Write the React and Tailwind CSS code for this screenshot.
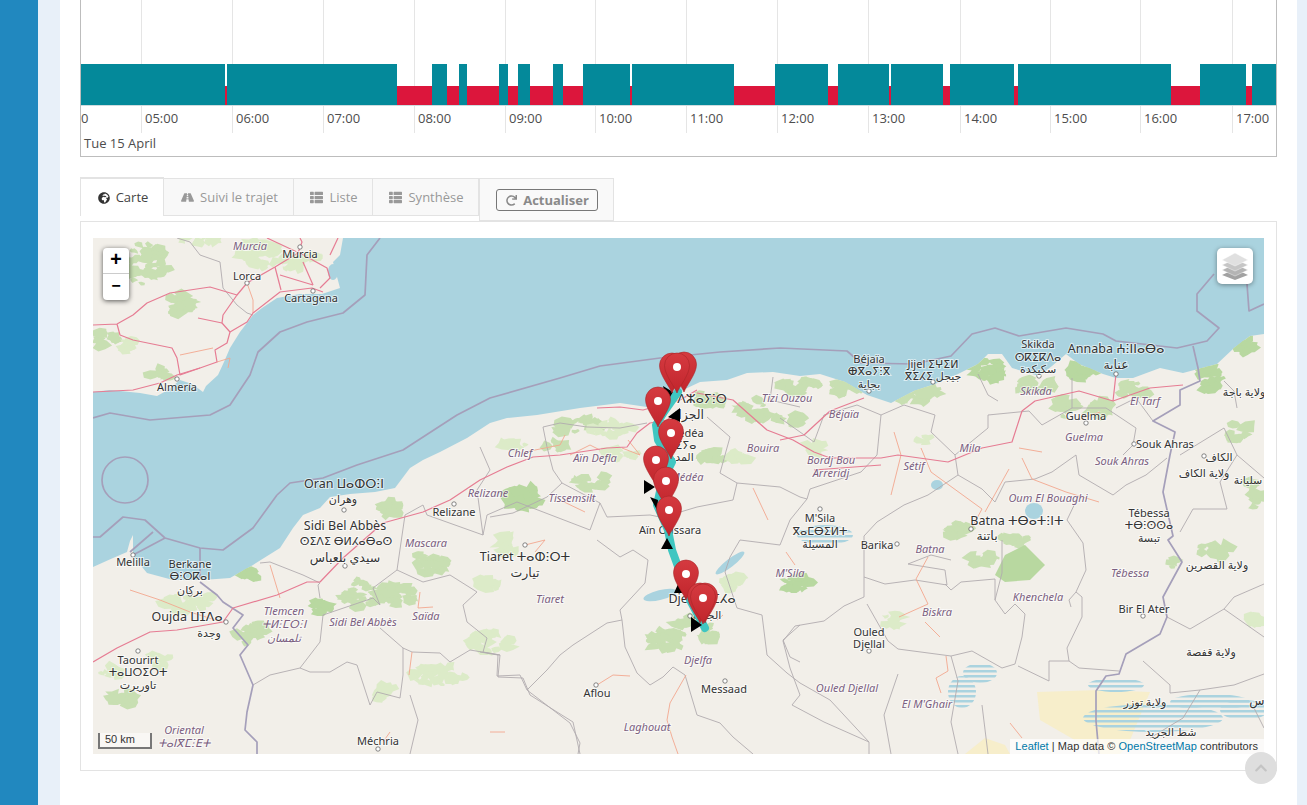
import React from 'react';
import { FaGlobeAfrica, FaRoad, FaThList, FaRedo, FaChevronUp } from 'react-icons/fa';

// timeline, px from the left edge of the chart
const driving = [
  [0, 144], [146, 170], [351, 15], [378, 8], [418, 9], [437, 12], [472, 10], [502, 47],
  [551, 102], [694, 53], [757, 51], [810, 52], [869, 64], [937, 153], [1119, 46], [1171, 24],
];
const ticks = [
  [60, '05:00'], [151, '06:00'], [242, '07:00'], [333, '08:00'], [424, '09:00'], [514, '10:00'],
  [605, '11:00'], [696, '12:00'], [787, '13:00'], [879, '14:00'], [969, '15:00'], [1059, '16:00'], [1151, '17:00'],
];

const landSpain =
  '93,238 343,238 340,255 333,262 340,288 322,294 300,294 277,298 262,308 253,315 240,332 230,348 224,362 218,375 206,386 203,392 192,384 180,380 168,390 157,396 140,393 110,390 93,392';
const landAfrica =
  '93,567 113,558 127,552 130,541 133,535 133,556 147,573 173,580 203,580 230,578 253,565 280,548 293,528 303,515 320,508 330,497 350,494 375,492 395,488 410,468 423,460 440,452 467,438 490,423 507,418 537,415 580,408 620,403 647,407 667,403 683,390 700,382 727,380 747,373 773,372 800,376 820,374 845,382 867,395 891,403 914,391 935,384 958,374 978,364 988,354 1002,354 1012,368 1039,376 1052,366 1066,354 1079,364 1103,374 1116,378 1133,378 1160,368 1183,373 1217,364 1234,348 1250,336 1264,334 1264,754 93,754';

// sea borders and the thick country borders
const maritime = [
  '380,238 367,255 365,295 343,313 307,322 280,332 258,352 250,375 230,405 210,415 150,420 110,413 93,418',
  '277,495 290,483 323,478 357,465 403,450 457,415 490,398 560,378 600,366 660,358 720,352 780,348 847,351 861,363 914,364 951,356 972,334 995,328 1019,336 1066,328 1103,334 1116,341 1177,348 1207,341 1219,328 1197,311 1197,294 1214,274',
  '1247,284 1249,311 1264,304',
  '277,495 253,528 223,550 200,548 165,538 145,520 123,517 100,537 93,537',
  '200,548 200,578',
  '165,538 133,555',
  '153,532 130,552',
  '1193,346 1198,368 1200,381 1180,390 1180,405 1153,421 1175,432 1170,455 1163,492 1173,536 1168,540 1182,562 1163,597 1167,617 1160,634 1126,654 1119,674 1106,676 1096,691 1096,721 1099,754',
  '200,582 217,595 223,602 243,615 233,628 248,645 240,655 253,685 247,712 245,730 257,742 257,754',
];

const borders = [
  '177,238 190,242 200,255 220,262 223,288 237,305 247,313 253,315',
  '480,652 498,655 497,676 520,675 527,690 547,670 560,655 573,645 607,623 622,620 620,610 645,583 648,560 633,550 620,557 597,540',
  '622,620 625,647 637,673 650,685 663,677 673,667 685,675 697,715 720,723 733,737 753,754',
  '527,690 570,723 580,743 578,754',
  '740,540 730,557 725,572 737,608 762,615 767,655 787,673 800,683 830,700 869,742',
  '800,625 783,640 790,657 800,662',
  '253,685 270,675 300,668 310,672 330,672 347,662 357,665 370,705 377,692 400,698 403,675 403,648 380,628',
  '300,668 320,642 323,615 373,598 380,605 373,588 397,570 423,582 450,575 477,592 463,605 467,622 487,638 483,652 500,655 498,677 523,678 530,695 557,712 573,722 580,754',
  '320,598 318,585 320,583 303,575 270,562 260,563',
  '403,648 412,652 440,653 450,662 470,650 500,655',
  '410,695 418,720 410,754',
  '483,535 427,515 423,505 405,515 397,570',
  '483,535 487,515 517,502 590,530 600,503',
  '480,447 490,470 477,490 483,535',
  '543,427 560,423 587,427 620,428 647,423',
  '543,427 547,447 553,470 562,483 600,503 607,517 650,515 660,517',
  '562,483 547,497 513,513 490,517',
  '707,417 730,437 720,473 737,483 780,487 800,497 807,499',
  '737,483 733,500 697,507 677,513',
  '773,377 770,400 800,407',
  '780,418 800,432 814,442 824,415 857,405 881,415 904,405 935,415 931,432 955,455 958,475 928,495 904,505 877,522 864,536 864,577 864,597 844,606 824,621 795,626 783,641 790,668 800,695 792,705 824,722 869,742 869,754',
  '881,415 877,455 861,472 810,489 807,499 790,520 780,545 740,540',
  '958,475 982,489 995,502 1005,482 1035,479 1052,472 1076,455 1079,475 1113,495 1126,485 1146,475 1167,458',
  '955,455 988,428 988,415 1029,411 1042,425 1072,408 1106,408 1136,428 1133,445 1123,455',
  '998,401 988,395 978,374',
  '1072,378 1072,408',
  '1116,408 1136,398 1153,421',
  '1180,455 1224,428 1237,455 1220,482 1227,509 1193,509 1180,532',
  '1237,408 1234,391 1224,381',
  '1237,455 1264,478',
  '864,577 885,584 915,580 947,585 945,570 908,564 931,555 951,560',
  '867,604 888,641 898,649 951,656 972,651 1002,668 1015,664 1022,637 1025,614 1015,604 1005,614 995,600 995,579 961,582 951,590 945,584',
  '951,656 958,681 951,722 958,754',
  '898,674 884,715 891,754',
  '1018,666 1049,681 1049,661 1069,661 1079,668 1119,671',
  '1069,661 1067,648 1082,617 1082,597 1076,592 1069,600 1071,607',
  '1076,592 1086,570 1083,543 1067,520 1079,495',
  '1002,540 1002,573 995,600',
  '1167,617 1190,629 1224,609 1234,597 1264,584',
  '1143,661 1170,685 1170,693 1200,690 1234,685 1264,674',
  '1224,609 1264,637',
  '1200,690 1183,718 1150,738',
  '1254,708 1264,728',
  '982,705 988,754',
];

const roads = [
  '93,325 117,324 133,315 147,303 170,293 210,287 237,295 223,315 222,323 230,332 227,343 215,350 217,362 200,368 180,375 177,358 172,348 133,340 120,335 117,324',
  '93,392 133,390 160,383 177,375 200,368',
  '230,332 247,322 253,313 280,292 312,288 323,292',
  '237,295 247,283 275,267 298,253 302,242 300,238',
  '275,267 281,290',
  '280,275 303,282 313,285',
  '303,262 313,285',
  '300,253 327,268 330,278 320,288',
  '330,255 338,238',
  '267,238 297,252',
  '198,318 222,323',
  '93,662 117,648 150,632 177,630 223,622 233,608 277,595 307,582 320,582 343,558 383,523 423,512 450,500 480,480 507,467 533,457 560,455 607,448 627,447 637,433 650,423 667,420 680,410',
  '597,408 620,407 643,410 680,400 697,390',
  '697,393 733,400 767,430 793,440 814,452 830,458 881,458 898,455 948,462 982,448 1012,442 1022,411 1035,401 1079,391 1113,401 1150,388 1183,385',
  '780,440 804,435 830,411 864,398',
  '814,470 881,465',
  '1116,374 1113,401',
];

const minorRoads = [
  '180,355 213,348',
  '247,283 253,300 253,313',
  '217,362 230,358 228,368',
  '270,565 280,598',
  '420,592 418,608 433,607',
  '412,652 409,675',
  '390,732 383,742',
  '490,732 505,732',
  '597,685 613,675 630,676',
  '686,675 670,703 667,720 672,737 678,754',
  '717,620 723,615',
  '894,432 901,455 891,495',
  '921,448 931,472 982,509 971,529',
  '1009,469 985,512',
  '1019,448 1042,452',
  '1022,458 1032,479 1066,492 1099,502',
  '928,557 916,579 928,604 899,617',
  '925,622 940,637',
  '946,656 948,671 936,678 941,693',
  '1010,723 1022,738',
  '130,590 160,600 190,612 222,622',
  '560,500 585,512',
  '753,488 768,520',
  '786,552 795,565',
  '1078,420 1100,412',
  '525,545 545,540 535,552',
  '525,452 560,445 565,435',
  '570,455 590,445 600,450',
  '622,448 640,455 628,440',
];

// cx, cy, rx, ry, patches, colour index
const greenAreas = [
  [145, 262, 22, 24, 22, 1], [105, 338, 14, 8, 9, 1], [180, 305, 14, 10, 10, 1], [165, 374, 14, 5, 7, 1], [130, 345, 12, 5, 5, 2],
  [255, 255, 24, 14, 14, 2], [300, 262, 22, 8, 9, 2], [200, 240, 20, 6, 6, 2], [250, 575, 7, 6, 6, 0], [390, 508, 10, 8, 9, 1],
  [520, 498, 14, 10, 12, 0], [363, 592, 24, 14, 20, 1], [323, 608, 12, 6, 7, 0], [250, 632, 16, 13, 16, 1], [400, 595, 15, 10, 13, 1],
  [430, 562, 16, 10, 12, 1], [507, 545, 10, 10, 8, 2], [487, 585, 10, 6, 6, 2], [190, 602, 30, 8, 12, 2], [123, 698, 14, 8, 8, 1],
  [490, 642, 22, 10, 12, 2], [440, 675, 32, 9, 15, 2], [383, 692, 14, 9, 7, 2], [110, 670, 10, 6, 4, 2], [160, 660, 12, 6, 4, 2],
  [577, 424, 26, 8, 13, 1], [610, 428, 22, 8, 10, 2], [527, 497, 14, 12, 10, 0], [590, 480, 18, 8, 9, 1], [620, 455, 16, 6, 7, 2],
  [515, 445, 12, 5, 5, 2], [555, 445, 14, 5, 5, 1], [713, 457, 12, 5, 6, 1], [737, 457, 12, 5, 5, 2], [757, 410, 18, 10, 12, 1],
  [710, 400, 18, 7, 8, 1], [800, 385, 20, 8, 12, 1], [847, 388, 16, 8, 10, 1], [921, 395, 24, 8, 14, 1], [988, 371, 16, 11, 14, 0],
  [1035, 385, 16, 8, 10, 1], [1082, 371, 16, 8, 12, 0], [1133, 390, 18, 7, 10, 1], [1210, 378, 14, 11, 12, 0], [1244, 348, 10, 8, 8, 0],
  [1066, 408, 14, 9, 10, 1], [1099, 411, 11, 10, 9, 1], [790, 421, 14, 7, 8, 1], [814, 448, 10, 5, 4, 2], [958, 529, 12, 7, 7, 1],
  [1015, 539, 14, 7, 7, 1], [1257, 495, 8, 14, 7, 1], [982, 557, 16, 7, 9, 1], [797, 584, 14, 7, 9, 0], [891, 619, 9, 6, 6, 2],
  [1214, 550, 18, 7, 7, 1], [1170, 563, 7, 5, 3, 1], [1257, 620, 7, 7, 4, 2], [667, 640, 18, 12, 16, 1], [710, 633, 8, 8, 7, 1],
  [735, 583, 10, 6, 6, 2], [682, 622, 14, 5, 6, 1], [1240, 432, 12, 9, 6, 1], [925, 440, 14, 5, 3, 2],
];
const greenColours = ['#b8d8a0', '#c8dfb2', '#dcebc8'];

// fixed seed so the map never changes between renders
function makePatches() {
  let seed = 12345;
  const rnd = () => {
    seed = (seed * 16807) % 2147483647;
    return seed / 2147483647;
  };
  const out = [];
  greenAreas.forEach(([cx, cy, rx, ry, n, colour]) => {
    for (let i = 0; i < n * 1.6; i++) {
      const a = rnd() * Math.PI * 2;
      const d = Math.sqrt(rnd());
      const x = cx + Math.cos(a) * d * rx;
      const y = cy + Math.sin(a) * d * ry;
      const size = 2.5 + rnd() * 4.5;
      const pts = [];
      for (let k = 0; k < 7; k++) {
        const t = (k / 7) * Math.PI * 2;
        const r = size * (0.45 + rnd() * 0.9);
        pts.push(`${(x + Math.cos(t) * r * 1.4).toFixed(1)},${(y + Math.sin(t) * r * 0.9).toFixed(1)}`);
      }
      out.push({ pts: pts.join(' '), fill: greenColours[colour] });
    }
  });
  return out;
}
const patches = makePatches();

const labels = [
  ['r', 250, 250, 'Murcia'], ['p', 300, 258, 'Murcia'], ['p', 247, 280, 'Lorca'], ['p', 311, 302, 'Cartagena'],
  ['p', 177, 391, 'Almería'], ['P', 344, 488, 'Oran ⵡⴰⵀⵔⵗⵏ'], ['p', 343, 503, 'وهران'],
  ['P', 345, 530, 'Sidi Bel Abbès'], ['p', 346, 545, 'ⵙⵉⴷⵉ ⴱⵍⵃⴰⴱⴰⵙ'], ['P', 345, 562, 'سيدي بلعباس'],
  ['p', 454, 516, 'Relizane'], ['r', 488, 497, 'Relizane'], ['r', 426, 547, 'Mascara'], ['r', 572, 502, 'Tissemsilt'],
  ['r', 520, 457, 'Chlef'], ['r', 595, 462, 'Aïn Defla'], ['r', 763, 452, 'Bouira'], ['r', 787, 402, 'Tizi Ouzou'],
  ['r', 687, 481, 'Médéa'], ['p', 686, 437, 'Médéa'], ['p', 670, 534, 'Aïn Oussara'],
  ['P', 702, 403, 'ⴷⵣⴰⵢⵗⵔ'], ['P', 686, 419, 'الجزائر'], ['p', 682, 449, 'ⴷⵉⵢⴰ'], ['p', 680, 461, 'المدية'],
  ['P', 525, 561, 'Tiaret ⵜⴰⵀⵗⵔⵜ'], ['P', 525, 577, 'تيارت'], ['r', 550, 603, 'Tiaret'], ['r', 426, 620, 'Saïda'],
  ['r', 363, 626, 'Sidi Bel Abbès'], ['r', 284, 615, 'Tlemcen'], ['r', 284, 628, 'ⵜⵍⵗⵎⵔⵗⵏ'], ['r', 284, 642, 'تلمسان'],
  ['P', 187, 621, 'Oujda ⵡⵊⴷⴰ'], ['p', 209, 637, 'وجدة'], ['p', 190, 568, 'Berkane'], ['p', 190, 580, 'ⴱⵗⵔⴽⴰⵏ'], ['p', 190, 594, 'بركان'],
  ['p', 133, 566, 'Melilla'], ['p', 138, 664, 'Taourirt'], ['p', 138, 676, 'ⵜⴰⵡⵔⵉⵔⵜ'], ['p', 138, 689, 'تاوريرت'],
  ['r', 184, 734, 'Oriental'], ['r', 184, 747, 'ⵜⴰⵏⴳⵎⵗⴹⵜ'], ['p', 378, 745, 'Méchria'], ['p', 597, 697, 'Aflou'],
  ['r', 647, 731, 'Laghouat'], ['p', 724, 693, 'Messaad'], ['r', 698, 664, 'Djelfa'], ['P', 702, 603, 'Djelfa ⵊⵎⵃⴰ'], ['p', 707, 619, 'الجلفة'],
  ['r', 790, 577, 'M\'Sila'], ['p', 877, 549, 'Barika'], ['r', 930, 553, 'Batna'], ['r', 937, 616, 'Biskra'], ['r', 1038, 601, 'Khenchela'],
  ['p', 869, 636, 'Ouled'], ['p', 869, 648, 'Djellal'], ['r', 847, 692, 'Ouled Djellal'], ['r', 927, 708, 'El M\'Ghair'],
  ['r', 1130, 577, 'Tébessa'], ['p', 1144, 613, 'Bir El Ater'], ['p', 1217, 569, 'ولاية القصرين'], ['p', 1211, 656, 'ولاية قفصة'],
  ['p', 1145, 706, 'ولاية توزر'], ['p', 1171, 736, 'شط الجريد'], ['P', 1257, 705, 'س'],
  ['p', 869, 363, 'Béjaïa'], ['p', 869, 375, 'ⴲⴳⴰⵢⵗⴳ'], ['p', 869, 388, 'بجاية'], ['p', 933, 368, 'Jijel ⵉⵖⵉⵍ'], ['p', 933, 380, 'ⴳⵉⵃⵉ جيجل'],
  ['p', 1038, 348, 'Skikda'], ['p', 1038, 361, 'ⵙⴽⵉⴽⴷⴰ'], ['p', 1038, 373, 'سكيكدة'], ['P', 1116, 353, 'Annaba ⵄⵗⵏⵏⴰⴱⴰ'], ['P', 1116, 369, 'عنابة'],
  ['r', 844, 418, 'Béjaïa'], ['r', 1036, 395, 'Skikda'], ['r', 1145, 405, 'El Tarf'], ['p', 1086, 420, 'Guelma'], ['r', 1084, 441, 'Guelma'],
  ['p', 1165, 448, 'Souk Ahras'], ['r', 1122, 465, 'Souk Ahras'], ['r', 970, 452, 'Mila'], ['r', 831, 464, 'Bordj Bou'], ['r', 831, 477, 'Arreridj'],
  ['r', 914, 470, 'Sétif'], ['p', 1219, 461, 'الكاف'], ['p', 1204, 477, 'ولاية الكاف'], ['p', 1248, 484, 'سليانة'], ['p', 1244, 396, 'ولاية باجة'],
  ['r', 1048, 502, 'Oum El Bouaghi'], ['P', 1017, 525, 'Batna ⵜⴱⴰⵜⵗⵏⵜ'], ['P', 987, 540, 'باتنة'], ['p', 1149, 517, 'Tébessa'], ['p', 1149, 529, 'ⵜⴱⵗⵙⵙⴰ'], ['p', 1149, 542, 'تبسة'],
  ['p', 820, 522, 'M\'Sila'], ['p', 820, 535, 'ⴳⴰⵎⴱⵉⵍⵜ'], ['p', 820, 548, 'المسيلة'],
];

const cities = [
  [300, 247], [247, 283], [313, 291], [177, 379], [344, 510], [345, 566], [454, 504], [525, 545], [190, 594], [226, 622], [138, 651],
  [133, 555], [378, 749], [596, 685], [725, 681], [690, 616], [897, 544], [869, 651], [1143, 616], [869, 391], [933, 382], [1039, 376],
  [1116, 374], [1086, 423], [1134, 444], [1204, 456], [820, 509], [971, 529],
];

const labelClass = {
  p: 'fill-[#333] text-[11px] [paint-order:stroke] stroke-white/60 [stroke-width:2px]',
  P: 'fill-[#333] text-[12.5px] [paint-order:stroke] stroke-white/60 [stroke-width:2px]',
  r: 'fill-[#7b5f80] text-[11px] italic [paint-order:stroke] stroke-white/60 [stroke-width:2px]',
};

const track = '678,392 664,412 656,425 658,440 672,462 662,482 657,505 668,530 672,550 680,572 690,600 705,628';
const arrows = [
  '663,386 673,392 667,402',
  '680,408 680,422 668,417',
  '644,480 655,487 644,494',
  '650,497 658,500 657,510',
  '667,538 673,549 661,549',
  '679,582 684,593 674,593',
  '691,617 702,625 691,632',
];
const markers = [
  [672, 393], [684, 392], [677, 393], [658, 427], [671, 459], [656, 486], [666, 507], [669, 536], [686, 600], [700, 623], [705, 623], [703, 624],
];

function Pin({ x, y }) {
  return (
    <g transform={`translate(${x} ${y})`}>
      <path d="M0,0 C-2,-6 -12.5,-18 -12.5,-27.5 A12.5,12.5 0 0 1 12.5,-27.5 C12.5,-18 2,-6 0,0Z" fill="url(#pin)" stroke="#a92529" strokeWidth="0.6" />
      <circle cx="0" cy="-26" r="4" fill="#fff" />
    </g>
  );
}

function MapDrawing() {
  return (
    <svg viewBox="93 238 1171 516" className="block h-full w-full font-['Noto_Sans','DejaVu_Sans',sans-serif]">
      <defs>
        <linearGradient id="pin" x1="0" y1="0" x2="0" y2="1">
          <stop offset="0" stopColor="#d53a40" />
          <stop offset="1" stopColor="#c1252c" />
        </linearGradient>
        <pattern id="salt" width="6" height="5" patternUnits="userSpaceOnUse">
          <rect width="6" height="2.5" fill="#aad3df" />
        </pattern>
        <clipPath id="land">
          <polygon points={landSpain} />
          <polygon points={landAfrica} />
        </clipPath>
      </defs>
      <rect x="93" y="238" width="1171" height="516" fill="#aad3df" />
      <polygon points={landSpain} fill="#f2efe9" />
      <polygon points={landAfrica} fill="#f2efe9" />

      <polygon points="1037,692 1100,690 1150,692 1128,745 1120,754 1099,754 1040,720" fill="#f7eecb" />
      <polygon points="965,754 985,738 1005,745 1010,754" fill="#f7eecb" />
      <g clipPath="url(#land)">
        {patches.map((p, i) => <polygon key={i} points={p.pts} fill={p.fill} />)}
      </g>
      <polygon points="995,575 1005,555 1025,545 1045,565 1030,580 1005,582" fill="#b8d8a0" />

      <ellipse cx="333" cy="272" rx="5" ry="8" fill="#aad3df" />
      <ellipse cx="660" cy="595" rx="17" ry="5" fill="#aad3df" transform="rotate(-14 660 595)" />
      <ellipse cx="730" cy="563" rx="18" ry="4" fill="#aad3df" transform="rotate(-38 730 563)" />
      <ellipse cx="1034" cy="511" rx="9" ry="8" fill="#aad3df" />
      <ellipse cx="937" cy="485" rx="6" ry="5" fill="#aad3df" />
      <ellipse cx="980" cy="673" rx="17" ry="10" fill="url(#salt)" />
      <ellipse cx="962" cy="692" rx="14" ry="16" fill="url(#salt)" />
      <ellipse cx="1153" cy="718" rx="70" ry="14" fill="url(#salt)" />
      <ellipse cx="1210" cy="702" rx="40" ry="8" fill="url(#salt)" />
      <ellipse cx="1244" cy="710" rx="24" ry="10" fill="url(#salt)" />
      <ellipse cx="1116" cy="685" rx="28" ry="7" fill="url(#salt)" />
      <ellipse cx="825" cy="535" rx="28" ry="10" fill="url(#salt)" />

      {borders.map((p, i) => <polyline key={i} points={p} fill="none" stroke="#b1abaf" strokeWidth="0.9" strokeLinejoin="round" />)}
      {maritime.map((p, i) => <polyline key={i} points={p} fill="none" stroke="#a59fba" strokeWidth="1.7" strokeLinejoin="round" />)}
      <circle cx="125" cy="480" r="23" fill="none" stroke="#a59fba" strokeWidth="1.7" />
      {minorRoads.map((p, i) => <polyline key={i} points={p} fill="none" stroke="#f3a78f" strokeWidth="0.9" strokeLinejoin="round" />)}
      {roads.map((p, i) => <polyline key={i} points={p} fill="none" stroke="#e67c93" strokeWidth="1.2" strokeLinejoin="round" />)}

      {cities.map(([x, y], i) => <circle key={i} cx={x} cy={y} r="2.2" fill="#fff" stroke="#555" strokeWidth="0.7" />)}
      {labels.map(([kind, x, y, text], i) => (
        <text key={i} x={x} y={y} textAnchor="middle" className={labelClass[kind]}>{text}</text>
      ))}

      <polyline points={track} fill="none" stroke="#3fc6c1" strokeWidth="8" strokeLinejoin="round" strokeLinecap="round" />
      {arrows.map((p, i) => <polygon key={i} points={p} fill="#000" />)}
      {markers.map(([x, y], i) => <Pin key={i} x={x} y={y} />)}
    </svg>
  );
}

function Tab({ icon, children }) {
  return (
    <div className="mt-px flex h-[38px] items-center justify-center gap-[6px] border-t border-r border-b border-[#e3e3e3] bg-[#f8f8f8] pt-px pl-[2px] text-[#999]">
      {icon}
      <span>{children}</span>
    </div>
  );
}

export default function App() {
  return (
    <div className="flex h-[805px] overflow-hidden bg-white font-['Open_Sans',sans-serif] text-[13px]">
      <div className="w-[38px] shrink-0 bg-[#2188bf]"></div>
      <div className="w-[22px] shrink-0 bg-[#e8f0f9]"></div>

      <main className="min-w-0 flex-1 px-5">
        {/* timeline */}
        <div className="h-[157px] border-x border-b border-[#bdbdbd] text-[#4d4d4d]">
          <div className="relative h-[133px] overflow-hidden">
            {ticks.map(([x, label]) => (
              <div key={label} className="absolute top-0 h-[133px] w-px bg-[#e5e5e5]" style={{ left: x }}>
                <span className="absolute top-[110px] left-[4px] leading-4">{label}</span>
              </div>
            ))}
            <span className="absolute top-[110px] left-0 leading-4">0</span>
            <div className="absolute top-[86px] right-0 left-0 h-[19px] bg-[#dc163c]"></div>
            {driving.map(([x, w]) => (
              <div key={x} className="absolute top-[64px] h-[41px] bg-[#04899a]" style={{ left: x, width: w }}></div>
            ))}
            <div className="absolute top-[105px] right-0 left-0 h-px bg-[#cfdcdf]"></div>
          </div>
          <div className="pl-[3px] leading-5">Tue 15 April</div>
        </div>

        {/* tabs */}
        <div className="mt-5 grid h-[44px] grid-cols-[84px_130px_79px_106px_135px] items-start">
          <div className="relative z-10 flex h-[39px] items-center justify-center gap-[6px] border-x border-t-2 border-[#e3e3e3] bg-white pl-[2px] text-[#444]">
            <FaGlobeAfrica className="text-[12px] text-[#333]" />
            <span>Carte</span>
          </div>
          <Tab icon={<FaRoad className="text-[13px]" />}>Suivi le trajet</Tab>
          <Tab icon={<FaThList className="text-[13px]" />}>Liste</Tab>
          <Tab icon={<FaThList className="text-[13px]" />}>Synthèse</Tab>
          <div className="relative z-10 mt-px flex h-[43px] items-start justify-center border-x border-t border-b border-[#e3e3e3] bg-[#f9f9f9] pt-[10px]">
            <button className="flex h-[22px] w-[102px] items-center justify-center gap-[6px] rounded-[3px] border border-[#777] pt-px pl-[2px] font-bold text-[#8a8a8a]">
              <FaRedo className="text-[11px]" />
              Actualiser
            </button>
          </div>
        </div>

        <div className="h-[550px] border border-[#e3e3e3] px-3 py-4">
          <div className="relative h-[516px] overflow-hidden">
            <MapDrawing />

            <div className="absolute top-[10px] left-[10px] w-[26px] overflow-hidden rounded-[4px] bg-white font-['Liberation_Mono',monospace] text-[20px] font-bold text-black shadow-[0_1px_5px_rgba(0,0,0,0.65)]">
              <div className="h-[26px] border-b border-[#ccc] text-center leading-[25px]">+</div>
              <div className="h-[26px] text-center text-[16px] leading-[26px]">−</div>
            </div>

            <div className="absolute top-[10px] right-[11px] flex h-9 w-9 items-center justify-center rounded-[5px] bg-white shadow-[0_1px_5px_rgba(0,0,0,0.4)]">
              <svg viewBox="0 0 28 28" className="h-[28px] w-[28px]">
                <path d="M14 17 L27 23 L14 28 L1 23Z" fill="#a2a2a2" />
                <path d="M14 12 L27 18 L14 24 L1 18Z" fill="#b4b4b4" stroke="#fff" strokeWidth="0.4" />
                <path d="M14 7 L27 13 L14 19 L1 13Z" fill="#c6c6c6" stroke="#fff" strokeWidth="0.4" />
                <path d="M14 1 L27 8 L14 14 L1 8Z" fill="#e0e0e0" stroke="#fff" strokeWidth="0.4" />
              </svg>
            </div>

            <div className="absolute bottom-[5px] left-[5px] h-[16px] w-[54px] border-x-2 border-b-2 border-[#777] bg-white/50 pl-[5px] font-['Liberation_Sans',sans-serif] text-[11px] leading-[13px] text-[#333]">
              50 km
            </div>

            <div className="absolute right-0 bottom-0 h-[15px] bg-white/70 pr-[6px] pl-[5px] font-['Liberation_Sans',sans-serif] text-[11px] leading-[15px] tracking-[0.05px] text-[#333]">
              <span className="text-[#0078a8]">Leaflet</span> | Map data © <span className="text-[#0078a8]">OpenStreetMap</span> contributors
            </div>
          </div>
        </div>
      </main>

      <div className="w-[10px] shrink-0 bg-[#e8f0f9]"></div>

      <div className="fixed right-[30px] bottom-[21px] flex h-8 w-8 items-center justify-center rounded-full bg-[#dedede] text-[#c4c4c4]">
        <FaChevronUp className="text-[14px]" />
      </div>
    </div>
  );
}
